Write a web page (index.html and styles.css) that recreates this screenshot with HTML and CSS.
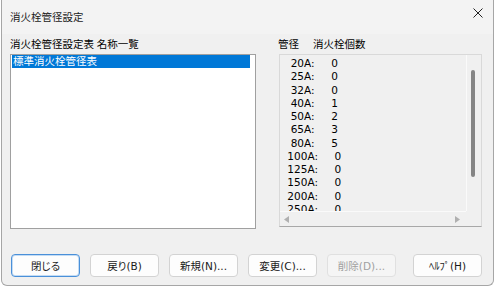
FILE: index.html
```html
<!doctype html>
<html lang="ja">
  <head>
    <meta charset="UTF-8" />
    <title>消火栓管径設定</title>
    <link rel="stylesheet" href="styles.css">
  </head>
  <body>
    <div class="window">
      <div class="titlebar">
        <span class="title">消火栓管径設定</span>
        <svg class="close" width="10" height="10" viewBox="0 0 10 10">
          <path d="M0.5 0.5 L9.5 9.5 M9.5 0.5 L0.5 9.5" stroke="#222" stroke-width="1" fill="none" />
        </svg>
      </div>

      <div class="content">
        <div class="col-left">
          <div class="caption">消火栓管径設定表 名称一覧</div>
          <div class="listbox">
            <div class="item selected">標準消火栓管径表</div>
          </div>
        </div>

        <div class="col-right">
          <div class="caption"><span class="cap-size">管径</span><span>消火栓個数</span></div>
          <div class="viewer">
            <div class="viewer-body">
              <div class="lines">
                <div class="line">  20A:     0</div>
                <div class="line">  25A:     0</div>
                <div class="line">  32A:     0</div>
                <div class="line">  40A:     1</div>
                <div class="line">  50A:     2</div>
                <div class="line">  65A:     3</div>
                <div class="line">  80A:     5</div>
                <div class="line"> 100A:     0</div>
                <div class="line"> 125A:     0</div>
                <div class="line"> 150A:     0</div>
                <div class="line"> 200A:     0</div>
                <div class="line"> 250A:     0</div>
              </div>
              <div class="vscroll"><div class="thumb"></div></div>
            </div>
            <div class="hscroll">
              <svg width="5" height="7" viewBox="0 0 5 7"><path d="M0 3.5 L5 0 L5 7 Z" fill="#b0b0b0" /></svg>
              <svg width="5" height="7" viewBox="0 0 5 7"><path d="M5 3.5 L0 0 L0 7 Z" fill="#b0b0b0" /></svg>
            </div>
          </div>
        </div>
      </div>

      <div class="buttons">
        <button class="btn default">閉じる</button>
        <button class="btn">戻り(B)</button>
        <button class="btn">新規(N)...</button>
        <button class="btn">変更(C)...</button>
        <button class="btn" disabled>削除(D)...</button>
        <button class="btn help">ﾍﾙﾌﾟ(H)</button>
      </div>
    </div>
  </body>
</html>
```

FILE: styles.css
```css
* {
  margin: 0;
  padding: 0;
  box-sizing: border-box;
}

body {
  background-color: #ffffff;
  font-family: "Noto Sans", "Noto Sans CJK JP", sans-serif;
  font-size: 10.5px;
  font-feature-settings: "palt";
  color: #000000;
}

.window {
  margin-left: 1px;
  width: 493px;
  background-color: #f0f0f0;
  border: 1px solid #a6a6a6;
  border-top: none;
  border-radius: 0 0 6px 6px;
  padding-bottom: 8px;
}

.titlebar {
  height: 34px;
  padding: 10px 0 0 8px;
  display: flex;
  justify-content: space-between;
  line-height: 14px;
  background-color: #f3f3f3;
}

.title {
  color: #1a1a1a;
}

.close {
  margin: 0 10px 0 0;
  position: relative;
  top: -2px;
}

.content {
  display: flex;
  gap: 23px;
  padding: 0 10px 0 8px;
}

.caption {
  margin: 3px 0 3px;
  line-height: 14px;
  white-space: nowrap;
}

.cap-size {
  margin: 0 14px 0 -1px;
}

.col-left {
  width: 246px;
}

.col-right {
  width: 203px;
}

.listbox {
  height: 175px;
  background-color: #ffffff;
  border: 1px solid #a0a0a0;
}

.item {
  height: 13px;
  line-height: 13px;
  width: 238px;
  margin-left: 1px;
  padding-left: 1px;
  white-space: nowrap;
}

.selected {
  background-color: #0078d7;
  color: #ffffff;
}

.viewer {
  height: 173px;
  border: 1px solid #d9d9d9;
  border-bottom-color: #a8a8a8;
  display: flex;
  flex-direction: column;
}

.viewer-body {
  height: 156px;
  display: flex;
}

.lines {
  flex: 1;
  overflow: hidden;
  padding: 2px 0 0 4px;
  font-family: "DejaVu Sans", sans-serif;
  font-size: 10.5px;
  line-height: 13.27px;
  color: #000000;
}

.line {
  white-space: pre;
}

.vscroll {
  width: 15px;
  border-left: 1px solid #fafafa;
  padding: 15px 0 0 4px;
}

.thumb {
  width: 4px;
  height: 107px;
  background-color: #858585;
  border-radius: 2px;
}

.hscroll {
  height: 15px;
  border-top: 1px solid #fafafa;
  margin-right: 15px;
  display: flex;
  justify-content: space-between;
  align-items: center;
  padding: 0 6px 0 4px;
}

.buttons {
  display: flex;
  gap: 10px;
  padding-left: 8px;
  margin-top: 25px;
}

.btn {
  width: 69px;
  height: 23px;
  font-family: "DejaVu Sans", "Noto Sans CJK JP", sans-serif;
  font-size: 10.5px;
  font-feature-settings: "palt";
  color: #1a1a1a;
  background-color: #fdfdfd;
  border: 1px solid #d3d3d3;
  border-radius: 4px;
}

.btn:disabled {
  color: #a0a0a0;
  background-color: #f5f5f5;
  border-color: #e0e0e0;
}

.default {
  margin-left: 1px;
  border-color: #4a90d9;
  box-shadow: inset 0 0 0 1px #c4dcf4;
}

.help {
  margin-left: 7px;
}
```
